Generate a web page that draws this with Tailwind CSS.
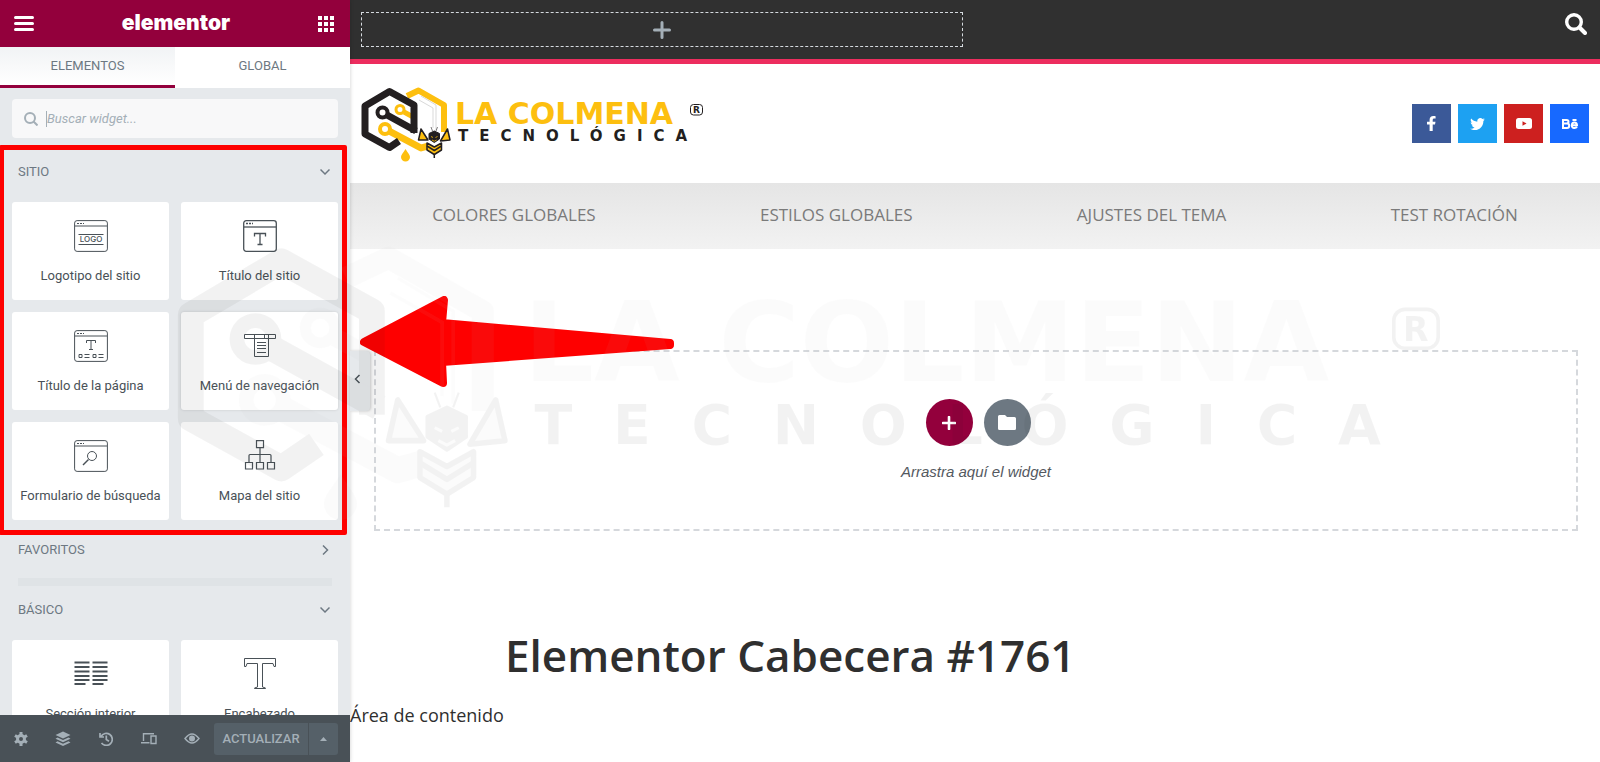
<!DOCTYPE html>
<html lang="es">
<head>
    <meta charset="UTF-8">
    <meta name="viewport" content="width=device-width, initial-scale=1.0">
    <title>Elementor Cabecera #1761</title>
    <script src="https://cdn.jsdelivr.net/npm/@tailwindcss/browser@4"></script>
</head>
<body class="relative flex h-screen overflow-hidden bg-white font-['Roboto',sans-serif]">

    <!-- Logotipo, se usa en la cabecera y como marca de agua -->
    <svg class="hidden" aria-hidden="true">
        <symbol id="logo" viewBox="0 0 342 76">
            <!-- Hexágono amarillo -->
            <g fill="none" stroke="#fdbf0f" stroke-linejoin="round">
                <path d="M46 10 57.500 4.500 83 19V46" stroke-width="6"/>
                <circle cx="39" cy="23.500" r="4" stroke-width="3"/>
                <path d="M43 26 54 32" stroke-width="5"/>
                <circle cx="24" cy="43" r="5" stroke-width="4"/>
                <path d="M28 45 60 62 67 60" stroke-width="7"/>
            </g>
            <path d="M60 10 75 19V44M58 14 72 22V42" fill="none" stroke="#d9d9d9" stroke-width="1"/>
            <!-- Hexágono negro -->
            <g fill="none" stroke="#231f20">
                <path d="M38 55 28.500 61.500 4 48V20L28.500 5.500 53 19V47" stroke-width="7" stroke-linejoin="round"/>
                <circle cx="21.500" cy="26.500" r="5" stroke-width="4"/>
                <path d="M26 29 55 45" stroke-width="7"/>
            </g>
            <path d="M44.500 63C47 67 49 69 49 71a4.500 4.500 0 0 1-9 0c0-2 2-4 4.500-8Z" fill="#fdbf0f"/>
            <!-- Abeja -->
            <g stroke="#231f20" stroke-linejoin="round">
                <path d="M60 43 57.500 54 67 54ZM86.500 43 89 54 79.500 55Z" fill="#fdbf0f" stroke-width="1.500"/>
                <path d="M70 41 71.500 45M76.500 41 75 45" stroke-width=".6"/>
                <path d="M66 57 73.300 61 80.500 57V64L73.300 68.500 66 64Z" fill="#fdbf0f" stroke-width="1.500"/>
                <path d="M66 60 73.300 64.500 80.500 60M73.300 68V72" fill="none" stroke-width="1.500"/>
                <path d="M73.300 45 78.500 47.500V53L73.300 56.500 68 53V47.500Z" fill="#231f20" stroke-width="1"/>
            </g>
            <path d="M70 50.500 72 51.500M76.500 50.500 74.500 51.500M71 54 73.300 55.200 75.500 54" fill="none" stroke="#fdbf0f" stroke-width=".8"/>
            <text x="94" y="38" fill="#fdbf0f" class="font-['DejaVu_Sans',sans-serif] text-[30px] font-bold">LA COLMENA</text>
            <text x="97" y="55" fill="#231f20" class="font-['DejaVu_Sans',sans-serif] text-[15px] font-bold tracking-[11px]">TECNOLÓGICA</text>
            <rect x="329.500" y="18.500" width="12" height="10.500" rx="3" fill="none" stroke="#231f20"/>
            <text x="332" y="27" fill="#231f20" class="font-['DejaVu_Sans',sans-serif] text-[9px] font-bold">R</text>
        </symbol>
    </svg>

    <!-- Panel lateral -->
    <aside class="relative z-10 flex w-[350px] shrink-0 flex-col bg-[#e6e9ec] shadow-[0_0_4px_#00000033]">
        <header class="flex h-[47px] shrink-0 items-center justify-between bg-[#93003c] pr-4 pl-[14px] text-white">
            <button aria-label="Menú">
                <svg class="h-[15px] w-5" viewBox="0 0 20 15" stroke="currentColor" stroke-width="3" stroke-linecap="round"><path d="M1.500 1.500h17M1.500 7.500h17M1.500 13.500h17"/></svg>
            </button>
            <span class="pb-[2px] font-['Inter',sans-serif] text-[21px] font-black">elementor</span>
            <button aria-label="Widgets">
                <svg class="size-4" viewBox="0 0 16 16" fill="currentColor"><path d="M0 0h4v4H0zM6 0h4v4H6zM12 0h4v4h-4zM0 6h4v4H0zM6 6h4v4H6zM12 6h4v4h-4zM0 12h4v4H0zM6 12h4v4H6zM12 12h4v4h-4z"/></svg>
            </button>
        </header>

        <div class="grid h-[41px] shrink-0 grid-cols-2 text-[13px] text-[#6d7882]">
            <button class="border-b-3 border-[#93003c] bg-linear-to-b from-[#f1f3f5] to-white uppercase">Elementos</button>
            <button class="border-b-3 border-white bg-white uppercase">Global</button>
        </div>

        <div class="min-h-0 flex-1 overflow-hidden">
            <div class="px-3 pt-[11px] pb-[7px]">
                <label class="flex h-[39px] items-center rounded bg-[#f8f8f9] pl-3">
                    <svg class="mr-2 size-[14px] text-[#a4afb7]" viewBox="0 0 14 14" fill="none" stroke="currentColor" stroke-width="2"><circle cx="6" cy="6" r="5"/><path d="M9.500 9.500 13.500 13.500"/></svg>
                    <span class="h-4 w-px bg-[#a4afb7]"></span>
                    <input type="search" aria-label="Buscar widget" placeholder="Buscar widget..." class="w-64 text-[13px] italic outline-none placeholder:text-[#a4afb7]">
                </label>
            </div>

            <!-- Sitio -->
            <section class="relative px-3 pb-[15px]">
                <button class="flex h-[57px] w-full items-center justify-between pr-2 pb-[3px] pl-[6px] text-[13px] text-[#6d7882]">
                    SITIO
                    <svg class="h-[10px] w-[10px]" viewBox="0 0 10 10" fill="none" stroke="currentColor" stroke-width="1.500"><path d="M.5 2.500 5 7 9.500 2.500"/></svg>
                </button>
                <div class="grid grid-cols-2 gap-3 text-[13px] text-[#495157]">
                    <button class="flex h-[98px] flex-col items-center rounded-[3px] bg-white pt-[18px]">
                        <svg class="h-8 w-[34px]" viewBox="0 0 34 32" fill="none" stroke="currentColor">
                            <rect x=".6" y=".6" width="32.800" height="30.800" rx="2.500"/><path d="M1 6h32M4.500 14.500h25M4.500 24.500h25"/><path d="M3 3.500h7" stroke-dasharray="2 1"/>
                            <text x="17" y="22" text-anchor="middle" fill="currentColor" stroke="none" class="font-['Inter',sans-serif] text-[8px] font-medium">LOGO</text>
                        </svg>
                        <span class="mt-4 leading-4">Logotipo del sitio</span>
                    </button>
                    <button class="flex h-[98px] flex-col items-center rounded-[3px] bg-white pt-[18px]">
                        <svg class="h-8 w-[34px]" viewBox="0 0 34 32" fill="none" stroke="currentColor" stroke-width="1.300">
                            <rect x=".7" y=".7" width="32.600" height="30.600" rx="2.500"/><path d="M1 7h32"/><path d="M3 3.500h7" stroke-dasharray="2 1"/>
                            <path d="M11.500 16.500V13.500h11v3M17 13.500v11M14.500 24.500h5"/>
                        </svg>
                        <span class="mt-4 leading-4">Título del sitio</span>
                    </button>
                    <button class="flex h-[98px] flex-col items-center rounded-[3px] bg-white pt-[18px]">
                        <svg class="h-8 w-[34px]" viewBox="0 0 34 32" fill="none" stroke="currentColor">
                            <rect x=".6" y=".6" width="32.800" height="30.800" rx="2.500"/><path d="M1 6h32"/><path d="M3 3.500h7" stroke-dasharray="2 1"/>
                            <path d="M12.500 13V10.500h9V13M17 10.500v9M15 19.500h4"/>
                            <path d="M5 24.500h3v3H5zM19 24.500h3v3h-3zM10.500 24.500h5M10.500 27.500h5M24.500 24.500h5M24.500 27.500h5"/>
                        </svg>
                        <span class="mt-4 leading-4">Título de la página</span>
                    </button>
                    <button class="flex h-[98px] flex-col items-center rounded-[3px] bg-white pt-[18px] shadow-[0_0_3px_#00000022]">
                        <svg class="h-8 w-[34px]" viewBox="0 0 34 32" fill="none" stroke="currentColor">
                            <path d="M1.500 4.500h31v4h-31zM11.500 4.500v22h14v-22M21.500 4.500v4M14 12.500h9M14 15.500h9M14 18.500h9M14 22.500h9"/>
                        </svg>
                        <span class="mt-4 leading-4">Menú de navegación</span>
                    </button>
                    <button class="flex h-[98px] flex-col items-center rounded-[3px] bg-white pt-[18px]">
                        <svg class="h-8 w-[34px]" viewBox="0 0 34 32" fill="none" stroke="currentColor">
                            <rect x=".6" y=".6" width="32.800" height="30.800" rx="2.500"/><path d="M1 6h32"/><path d="M3 3.500h7" stroke-dasharray="2 1"/>
                            <circle cx="18" cy="16" r="4.500"/><path d="M14.500 19.500 9 25" stroke-width="1.500"/>
                        </svg>
                        <span class="mt-4 leading-4">Formulario de búsqueda</span>
                    </button>
                    <button class="flex h-[98px] flex-col items-center rounded-[3px] bg-white pt-[18px]">
                        <svg class="h-8 w-[34px]" viewBox="0 0 34 32" fill="none" stroke="currentColor" stroke-width="1.200">
                            <path d="M13.500.600h7v7h-7zM2.500 22.500h7v6.500h-7zM13.500 22.500h7v6.500h-7zM24.500 22.500h7v6.500h-7zM17 7.500v15M6 22.500v-7q0-1 1-1h20q1 0 1 1v7"/>
                        </svg>
                        <span class="mt-4 leading-4">Mapa del sitio</span>
                    </button>
                </div>
                <div class="pointer-events-none absolute inset-y-0 -left-px right-[3px] rounded-xs border-5 border-[#fe0000]"></div>
            </section>

            <!-- Favoritos -->
            <section class="px-3">
                <button class="flex h-[30px] w-full items-center justify-between pr-2 pl-[6px] text-[13px] text-[#6d7882]">
                    FAVORITOS
                    <svg class="h-[10px] w-[10px]" viewBox="0 0 10 10" fill="none" stroke="currentColor" stroke-width="1.500"><path d="M3 .5 7.500 5 3 9.500"/></svg>
                </button>
            </section>
            <hr class="mx-[18px] mt-[13px] h-2 border-0 bg-[#dfe3e6]">

            <!-- Básico -->
            <section class="px-3">
                <button class="flex h-[54px] w-full items-center justify-between pr-2 pb-[6px] pl-[6px] text-[13px] text-[#6d7882]">
                    BÁSICO
                    <svg class="h-[10px] w-[10px]" viewBox="0 0 10 10" fill="none" stroke="currentColor" stroke-width="1.500"><path d="M.5 2.500 5 7 9.500 2.500"/></svg>
                </button>
                <div class="grid grid-cols-2 gap-3 text-[13px] text-[#495157]">
                    <button class="flex h-[98px] flex-col items-center rounded-[3px] bg-white pt-[18px]">
                        <svg class="h-8 w-[34px]" viewBox="0 0 34 32" fill="none" stroke="currentColor" stroke-width="1.800">
                            <path d="M.5 4.500h15M.5 9h15M.5 13.500h15M.5 18h15M.5 22h15M.5 26h11M18.500 4.500h15M18.500 9h15M18.500 13.500h15M18.500 18h15M18.500 22h15M18.500 26h11"/>
                        </svg>
                        <span class="mt-4 leading-4">Sección interior</span>
                    </button>
                    <button class="flex h-[98px] flex-col items-center rounded-[3px] bg-white pt-[18px]">
                        <svg class="h-8 w-[34px]" viewBox="0 0 34 32" fill="none" stroke="currentColor">
                            <path d="M1.500.5h31v8h-1.500l-1-3H19.500V29l3 1v.5h-11V30l3-1V5.500H4l-1 3H1.500z"/>
                        </svg>
                        <span class="mt-4 leading-4">Encabezado</span>
                    </button>
                </div>
            </section>
        </div>

        <!-- Barra inferior -->
        <footer class="flex h-[47px] shrink-0 items-center bg-[#495157] pr-3 text-[#a4afb7]">
            <div class="flex flex-1 justify-around">
                <button aria-label="Ajustes">
                    <svg class="size-[14px]" viewBox="0 0 14 14" fill="none" stroke="currentColor"><circle cx="7" cy="7" r="3.500" stroke-width="3"/><path d="M7 0v3M7 11v3M1 3.500 3.500 5M10.500 9 13 10.500M1 10.500 3.500 9M10.500 5 13 3.500" stroke-width="3"/></svg>
                </button>
                <button aria-label="Navegador">
                    <svg class="size-4" viewBox="0 0 16 16" fill="currentColor"><path d="M8 .5 15.500 4 8 7.500.5 4zM2.500 6.500.5 7.700 8 11.200l7.500-3.500-2-1.200L8 9zM2.500 10.300.5 11.500 8 15l7.500-3.500-2-1.200L8 12.800z"/></svg>
                </button>
                <button aria-label="Historial">
                    <svg class="size-[14px]" viewBox="0 0 14 14" fill="none" stroke="currentColor" stroke-width="1.700"><path d="M2 4.500A6 6 0 1 1 2.500 11M7.300 3.500v4l2.700 1.700M1 1v4h4"/></svg>
                </button>
                <button aria-label="Modo adaptable">
                    <svg class="size-4" viewBox="0 0 16 16" fill="none" stroke="currentColor" stroke-width="1.400"><path d="M2.500 10V2.700H13M0 11.700h8.500M10 5h5v7.500h-5z"/></svg>
                </button>
                <button aria-label="Vista previa">
                    <svg class="h-[11px] w-4" viewBox="0 0 16 11" fill="none" stroke="currentColor" stroke-width="1.400"><path d="M1 5.500Q8-3.500 15 5.500 8 14.500 1 5.500Z"/><circle cx="8" cy="5.500" r="3" fill="currentColor" stroke="none"/></svg>
                </button>
            </div>
            <div class="flex h-8 overflow-hidden rounded-[3px] bg-[#556068]">
                <button class="w-[94px] text-[13px] font-medium">ACTUALIZAR</button>
                <button aria-label="Opciones de guardado" class="flex w-[30px] items-center justify-center border-l border-[#495157]">
                    <svg class="h-1 w-[7px]" viewBox="0 0 7 4" fill="currentColor"><path d="M3.500 0 7 4H0z"/></svg>
                </button>
            </div>
        </footer>

        <button aria-label="Ocultar panel" class="absolute top-[351px] left-full flex h-[60px] w-5 items-center rounded-r bg-[#e6e9ec] pb-1 pl-1 text-[#495157] shadow-[1px_0_3px_#00000033]">
            <svg class="h-[10px] w-[7px]" viewBox="0 0 7 10" fill="none" stroke="currentColor" stroke-width="1.500"><path d="M5.500 1 1.500 5l4 4"/></svg>
        </button>
    </aside>

    <!-- Vista previa -->
    <main class="min-w-0 flex-1 font-['Open_Sans',sans-serif] text-[#2f2f2f]">
        <div class="flex h-16 items-start justify-between border-b-5 border-[#ec2d5e] bg-[#303030] px-[11px] pt-3">
            <button aria-label="Añadir widget" class="flex h-[35px] w-[49%] items-center justify-center border border-dashed border-[#d5dadf] text-[#a4afb7]">
                <svg class="size-[18px]" viewBox="0 0 18 18" stroke="currentColor" stroke-width="3" stroke-linecap="round"><path d="M9 1.500v15M1.500 9h15"/></svg>
            </button>
            <button aria-label="Buscar" class="mt-px mr-[2px] text-white">
                <svg class="size-[22px]" viewBox="0 0 22 22" fill="none" stroke="currentColor"><circle cx="9" cy="9" r="7.300" stroke-width="3.400"/><path d="M14.500 14.500 20 20" stroke-width="4" stroke-linecap="round"/></svg>
            </button>
        </div>

        <div class="flex h-[119px] items-center justify-between px-[11px]">
            <a href="#" aria-label="La Colmena Tecnológica"><svg class="h-[76px] w-[342px]"><use href="#logo"/></svg></a>
            <div class="flex gap-[7px] text-white">
                <a href="#" aria-label="Facebook" class="flex size-[39px] items-center justify-center bg-[#3b5998]">
                    <svg class="h-[15px] w-[9px]" viewBox="0 0 9 15" fill="currentColor"><path d="M8 8.500 8.500 5.700H5.700V4c0-.8.400-1.500 1.600-1.500h1.300V.200S7.400 0 6.300 0C4 0 2.600 1.400 2.600 3.800v1.900H0v2.800h2.600V15h3.100V8.500z"/></svg>
                </a>
                <a href="#" aria-label="Twitter" class="flex size-[39px] items-center justify-center bg-[#1da1f2]">
                    <svg class="h-3 w-[15px]" viewBox="0 0 512 416" fill="currentColor"><path d="M459 104c0 4 0 9 0 14 0 138-105 298-298 298C102 416 47 399 0 369c8 1 16 1 25 1 49 0 94-17 130-45-46-1-84-31-98-73 7 1 13 2 20 2 9 0 19-1 28-4-48-10-84-52-84-103v-1c14 8 30 13 47 13-28-19-47-51-47-87 0-19 5-37 14-53 52 64 129 105 216 110-2-8-3-16-3-24C248 47 295 0 353 0c30 0 57 13 77 33 23-5 46-13 66-25-8 24-24 45-46 58 21-2 42-8 60-16-14 21-31 39-51 54z"/></svg>
                </a>
                <a href="#" aria-label="YouTube" class="flex size-[39px] items-center justify-center bg-[#cd201f]">
                    <svg class="h-[11px] w-4" viewBox="0 0 16 11"><rect width="16" height="11" rx="2.500" fill="currentColor"/><path d="M6.500 3.200v4.600l4-2.300z" fill="#cd201f"/></svg>
                </a>
                <a href="#" aria-label="Behance" class="flex size-[39px] items-center justify-center bg-[#1769ff]">
                    <svg class="h-[10px] w-4" viewBox="0 0 16 10" fill="none" stroke="currentColor" stroke-width="2"><path d="M1 1h3.500q2 0 2 1.800t-2 1.800H1h4q2.200 0 2.200 2.200T5 9H1zM9.800 6.300h5.200q0-2.800-2.600-2.800T9.800 6.300t2.600 2.700q1.800 0 2.500-1.300M10.500 1h4"/></svg>
                </a>
            </div>
        </div>

        <nav class="flex h-[66px] items-center justify-around bg-linear-to-b from-[#e5e5e5] to-[#f2f2f2] pb-[3px] text-[17px] text-[#7a7a7a]">
            <a href="#">COLORES GLOBALES</a>
            <a href="#">ESTILOS GLOBALES</a>
            <a href="#">AJUSTES DEL TEMA</a>
            <a href="#">TEST ROTACIÓN</a>
        </nav>

        <div class="mt-[101px] mr-[22px] ml-6 flex h-[181px] flex-col items-center border-2 border-dashed border-[#d5d8dc] pt-[47px]">
            <div class="flex gap-[11px] pl-1 text-white">
                <button aria-label="Añadir sección" class="flex size-[47px] items-center justify-center rounded-full bg-[#93003c]">
                    <svg class="size-[14px]" viewBox="0 0 14 14" stroke="currentColor" stroke-width="2.600" stroke-linecap="round"><path d="M7 1v12M1 7h12"/></svg>
                </button>
                <button aria-label="Añadir plantilla" class="flex size-[47px] items-center justify-center rounded-full bg-[#6d7882]">
                    <svg class="h-[15px] w-[18px]" viewBox="0 0 18 15" fill="currentColor"><path d="M1.500 0H7l2 2h7.500Q18 2 18 3.500v10q0 1.500-1.500 1.500h-15Q0 15 0 13.500v-12Q0 0 1.500 0z"/></svg>
                </button>
            </div>
            <p class="mt-[14px] font-['Liberation_Sans',sans-serif] text-[15px] leading-6 text-[#54595f] italic">Arrastra aquí el widget</p>
        </div>

        <h1 class="mx-auto mt-[92px] max-w-[940px] text-[44px] leading-[64px] font-semibold">Elementor Cabecera #1761</h1>
        <p class="mt-3 text-lg leading-8">Área de contenido</p>
    </main>

    <!-- Flecha y marca de agua por encima de todo -->
    <svg class="pointer-events-none absolute top-[296px] left-[360px] z-20 h-[92px] w-[315px]" viewBox="0 0 315 92" fill="#fe0000" stroke="#fe0000" stroke-width="8" stroke-linejoin="round" aria-hidden="true">
        <path d="M4 46 84 4 82 27 310 47v2L82 66l1 21z"/>
    </svg>
    <svg class="pointer-events-none absolute top-[241px] left-[11%] z-30 h-[281px] w-[79%] opacity-5 grayscale" aria-hidden="true"><use href="#logo"/></svg>
</body>
</html>
